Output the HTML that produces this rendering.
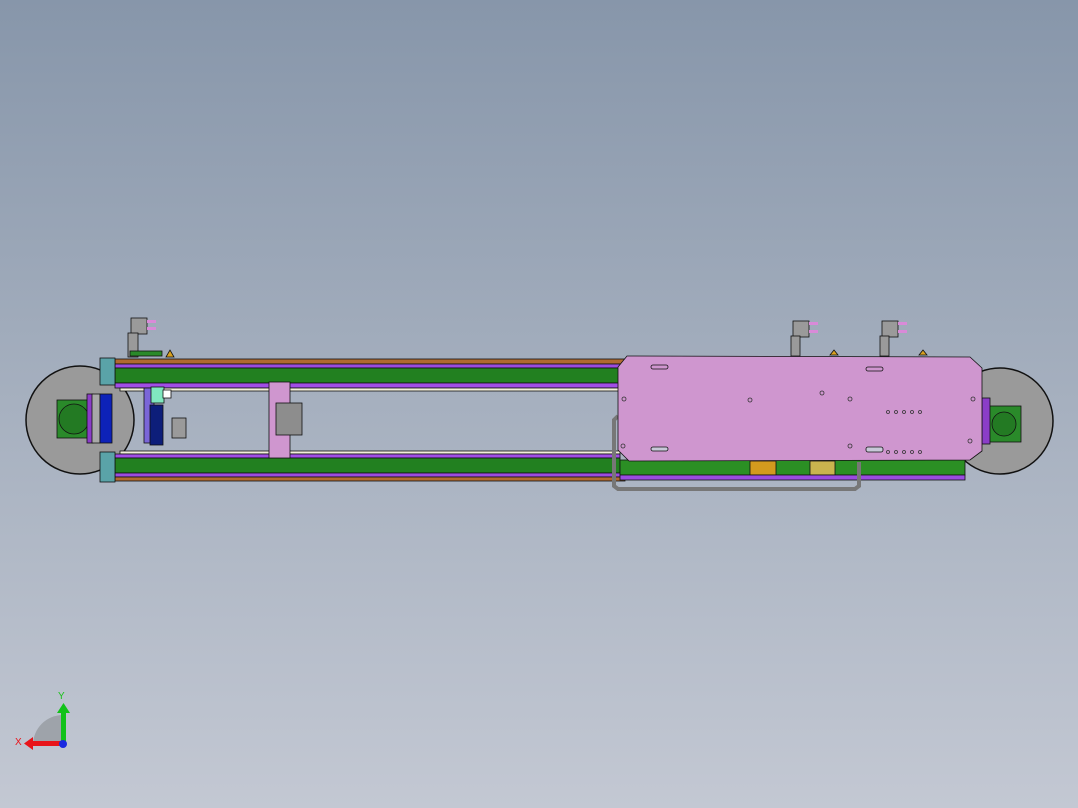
<!DOCTYPE html>
<html><head><meta charset="utf-8"><style>
html,body{margin:0;padding:0;width:1078px;height:808px;overflow:hidden}
body{background:linear-gradient(#8796aa 0%,#a6b0bf 50%,#c3c8d3 100%)}
svg{position:absolute;left:0;top:0}
</style></head><body>
<svg width="1078" height="808" viewBox="0 0 1078 808" xmlns="http://www.w3.org/2000/svg">
<g stroke="#111" stroke-width="0.8">
<!-- left disc -->
<circle cx="80" cy="420" r="54" fill="#9a9a9a" stroke-width="1.5"/>
<rect x="57" y="400" width="35" height="38" fill="#2a8a2a"/>
<circle cx="74" cy="419" r="15" fill="#237a23"/>
<rect x="87" y="394" width="6" height="49" fill="#8b3dc8"/>
<rect x="92" y="394" width="8" height="49" fill="#a8a8a8"/>
<rect x="100" y="394" width="12" height="49" fill="#0d22b8"/>
<!-- right disc -->
<circle cx="1000" cy="421" r="53" fill="#9a9a9a" stroke-width="1.5"/>
<rect x="985" y="406" width="36" height="36" fill="#2a8a2a"/>
<circle cx="1004" cy="424" r="12" fill="#237a23"/>
<rect x="982" y="398" width="8" height="46" fill="#8b3dc8"/>
<!-- top rails -->
<rect x="115" y="359" width="510" height="5" fill="#b06a30"/>
<rect x="115" y="364" width="510" height="4" fill="#9a4ce0"/>
<rect x="115" y="368" width="505" height="15" fill="#228020"/>
<rect x="115" y="383" width="505" height="5" fill="#a14ee6"/>
<rect x="120" y="388" width="500" height="3" fill="#f2eedc"/>
<!-- bottom rails -->
<rect x="120" y="451" width="500" height="3" fill="#f2eedc"/>
<rect x="115" y="454" width="505" height="4" fill="#a14ee6"/>
<rect x="115" y="458" width="505" height="15" fill="#228020"/>
<rect x="115" y="473" width="510" height="4" fill="#9a4ce0"/>
<rect x="115" y="477" width="510" height="4" fill="#b06a30"/>
<rect x="620" y="460" width="345" height="15" fill="#2b8f24"/>
<rect x="750" y="461" width="26" height="14" fill="#d39a1e"/>
<rect x="810" y="461" width="25" height="14" fill="#c9b44e"/>
<rect x="620" y="475" width="345" height="5" fill="#9a4ce0"/>
<!-- left clamps -->
<rect x="100" y="358" width="15" height="27" fill="#5aa3a8"/>
<rect x="100" y="452" width="15" height="30" fill="#5aa3a8"/>
<!-- left mechanism -->
<rect x="144" y="388" width="10" height="55" fill="#7a66d8"/>
<rect x="151" y="387" width="13" height="16" fill="#80e8c0"/>
<rect x="150" y="405" width="13" height="40" fill="#0d1e7a"/>
<rect x="172" y="418" width="14" height="20" fill="#9a9a9a"/>
<rect x="163" y="390" width="8" height="8" fill="#fff"/>
<!-- crossbar -->
<rect x="269" y="382" width="21" height="76" fill="#cf96cf"/>
<rect x="276" y="403" width="26" height="32" fill="#8d8d8d"/>
<!-- handle -->
<path d="M618,416 L614,420 L614,486 L618,489 L855,489 L859,486 L859,462" fill="none" stroke="#777" stroke-width="4"/>
<!-- pink plate -->
<path d="M627,356 L970,357 L982,368 L982,451 L970,460 L629,461 L618,450 L618,367 Z" fill="#cf96cf"/>
<rect x="651" y="365" width="17" height="4" rx="2" fill="#cf96cf"/>
<rect x="866" y="367" width="17" height="4" rx="2" fill="#cf96cf"/>
<rect x="651" y="447" width="17" height="4" rx="2" fill="#c8c8d8"/>
<rect x="866" y="447" width="17" height="5" rx="2" fill="#c8c8d8"/>
<!-- cylinders top -->
<g fill="#9a9a9a">
<rect x="131" y="318" width="16" height="16"/><rect x="128" y="333" width="10" height="24"/>
<rect x="793" y="321" width="16" height="16"/><rect x="791" y="336" width="9" height="20"/>
<rect x="882" y="321" width="16" height="16"/><rect x="880" y="336" width="9" height="20"/>
</g>
<g fill="#d98ad8" stroke="none">
<rect x="147" y="320" width="9" height="3"/><rect x="147" y="327" width="9" height="3"/>
<rect x="809" y="322" width="9" height="3"/><rect x="809" y="330" width="9" height="3"/>
<rect x="898" y="322" width="9" height="3"/><rect x="898" y="330" width="9" height="3"/>
</g>
<rect x="130" y="351" width="32" height="5" fill="#2a8a2a"/>
<path d="M166,357 L170,350 L174,357 Z" fill="#d8a020"/>
<path d="M830,355 L834,350 L838,355 Z" fill="#d8a020"/>
<path d="M919,355 L923,350 L927,355 Z" fill="#d8a020"/>
</g>
<!-- plate holes -->
<g fill="none" stroke="#333" stroke-width="0.8">
<circle cx="624" cy="399" r="2"/><circle cx="623" cy="446" r="2"/><circle cx="750" cy="400" r="2"/><circle cx="850" cy="399" r="2"/>
<circle cx="850" cy="446" r="2"/><circle cx="973" cy="399" r="2"/><circle cx="970" cy="441" r="2"/><circle cx="822" cy="393" r="2"/>
<circle cx="888" cy="412" r="1.5"/><circle cx="896" cy="412" r="1.5"/><circle cx="904" cy="412" r="1.5"/><circle cx="912" cy="412" r="1.5"/><circle cx="920" cy="412" r="1.5"/>
<circle cx="888" cy="452" r="1.5"/><circle cx="896" cy="452" r="1.5"/><circle cx="904" cy="452" r="1.5"/><circle cx="912" cy="452" r="1.5"/><circle cx="920" cy="452" r="1.5"/>
</g>
<!-- axis triad -->
<path d="M33,745 A30,30 0 0 1 63,715 L63,745 Z" fill="#9ea3aa"/>
<rect x="30" y="741" width="33" height="5" fill="#e8141a"/>
<path d="M24,743.5 L33,737 L33,750 Z" fill="#e8141a"/>
<rect x="61" y="712" width="5" height="33" fill="#12c21a"/>
<path d="M63.5,703 L57,713 L70,713 Z" fill="#12c21a"/>
<circle cx="63" cy="744" r="4" fill="#1a2ae0"/>
<text x="58" y="699" font-family="Liberation Sans, sans-serif" font-size="10" fill="#1ac21a">Y</text>
<text x="15" y="745" font-family="Liberation Sans, sans-serif" font-size="10" fill="#e8141a">X</text>
</svg>
</body></html>
